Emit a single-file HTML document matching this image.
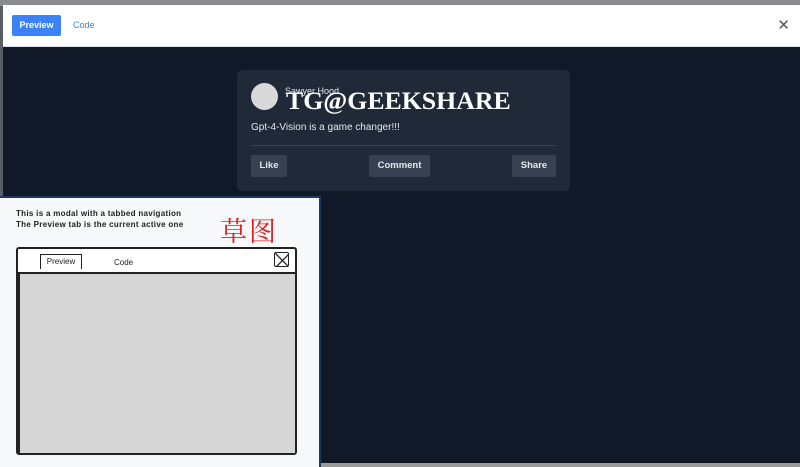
<!DOCTYPE html>
<html><head><meta charset="utf-8"><style>
*{margin:0;padding:0;box-sizing:border-box}
body{width:800px;height:467px;overflow:hidden;background:#5a5d63;font-family:"Liberation Sans",sans-serif;position:relative}
.top{position:absolute;left:0;top:0;width:800px;height:6px;background:#8a8b8e}
.hdr{position:absolute;left:3px;top:5px;width:797px;height:42px;background:#fff;border-bottom:1px solid #dde3ec}
.prev{position:absolute;left:9px;top:10px;width:49px;height:21px;background:#3b82f6;color:#fff;font-size:9px;font-weight:bold;line-height:21px;text-align:center;border-radius:2px}
.code{position:absolute;left:70px;top:10px;line-height:21px;font-size:9px;color:#4a7fd0}
.x{position:absolute;right:10px;top:10px;font-size:15px;color:#555;line-height:21px}
.dark{position:absolute;left:3px;top:47px;width:797px;height:416px;background:#111827}
.bot{position:absolute;left:0;top:463px;width:800px;height:4px;background:#9a9a9a}
.card{position:absolute;left:237px;top:70px;width:333px;height:121px;background:#1f2937;border-radius:5px}
.av{position:absolute;left:14px;top:13px;width:27px;height:27px;border-radius:50%;background:#d9d9d9}
.name{position:absolute;left:48px;top:16px;font-size:9px;color:#e5e7eb}
.msg{position:absolute;left:14px;top:52px;font-size:10px;color:#e5e7eb}
.hr{position:absolute;left:14px;top:75px;width:305px;height:1px;background:#374151}
.btn{position:absolute;top:85px;height:22px;background:#374151;color:#e5e7eb;font-size:9.5px;font-weight:bold;line-height:22px;text-align:center;border-radius:2px}
.wm{position:absolute;left:286px;top:86px;font-family:"Liberation Serif",serif;font-weight:bold;font-size:25.8px;color:#fff}
.sk{position:absolute;left:0;top:196px;width:321px;height:271px;background:#f7f8fa;border-top:2px solid #1e3a5f;border-right:2px solid #1e3a5f}
.sk .t{position:absolute;left:16px;font-size:8px;font-weight:bold;color:#222;letter-spacing:0.3px}
.cn{position:absolute;left:220px;top:12px;font-family:"Noto Serif CJK SC",serif;font-size:27px;color:#e02020;letter-spacing:2px}
.wf{position:absolute;left:16px;top:49px;width:281px;height:208px;border:2px solid #222;border-radius:3px;background:#fff}
.wf .tab{position:absolute;left:22px;top:5px;width:42px;height:15px;border:1.5px solid #222;border-bottom:none;font-size:8px;text-align:center;line-height:14px;color:#222}
.wf .c{position:absolute;left:96px;top:9px;font-size:8px;color:#222}
.wf .bx{position:absolute;right:6px;top:3px;width:15px;height:15px;border:1.5px solid #222;border-radius:2px;overflow:hidden}
.wf .body{position:absolute;left:0;top:23px;right:0;bottom:0;border-top:2px solid #222;border-left:2px solid #222;background-color:#e4e4e4;background-image:radial-gradient(#aaa 0.6px,transparent 0.7px);background-size:2px 2px}
</style></head><body>
<div class="top"></div>
<div class="hdr"><div class="prev">Preview</div><div class="code">Code</div><div class="x">✕</div></div>
<div class="dark"></div>
<div class="bot"></div>
<div class="card">
<div class="av"></div>
<div class="name">Sawyer Hood</div>
<div class="msg">Gpt-4-Vision is a game changer!!!</div>
<div class="hr"></div>
<div class="btn" style="left:14px;width:36px">Like</div>
<div class="btn" style="left:132px;width:61px">Comment</div>
<div class="btn" style="left:275px;width:44px">Share</div>
</div>
<div class="wm">TG@GEEKSHARE</div>
<div class="sk">
<div class="t" style="top:11px">This is a modal with a tabbed navigation</div>
<div class="t" style="top:22px">The Preview tab is the current active one</div>
<div class="cn">草图</div>
<div class="wf">
<div class="tab">Preview</div><div class="c">Code</div>
<div class="bx"><svg width="15" height="15"><path d="M0 0L15 15M15 0L0 15" stroke="#222" stroke-width="1.3"/></svg></div>
<div class="body"></div>
</div>
</div>
</body></html>
